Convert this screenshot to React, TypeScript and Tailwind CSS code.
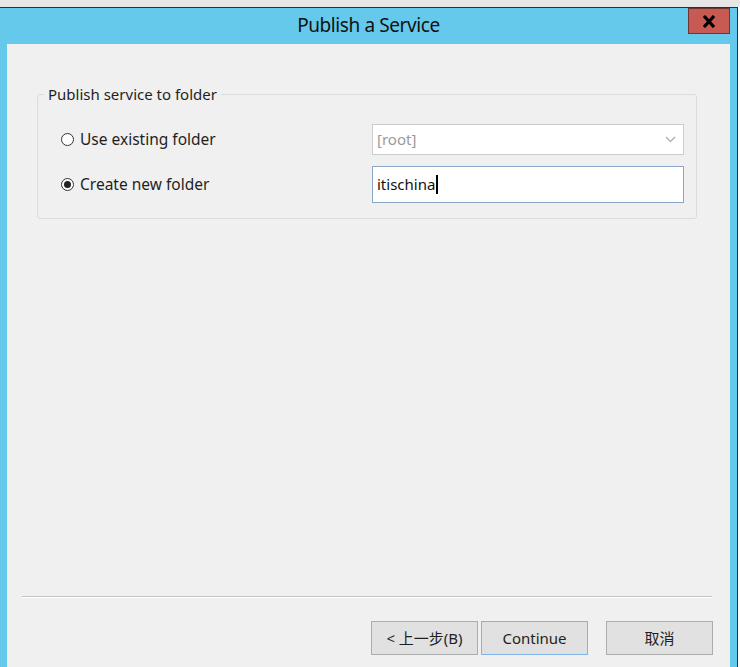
import React from 'react'

const ui = { fontFamily: '"Noto Sans", "Noto Sans CJK SC", sans-serif' }

function Radio({ checked, label }: { checked?: boolean; label: string }) {
  return (
    <label className="flex items-center gap-[6px] text-[15.5px] text-[#1f1f1f]">
      <span className="w-[13px] h-[13px] rounded-full border border-[#333] bg-white flex items-center justify-center">
        {checked && <span className="w-[7px] h-[7px] rounded-full bg-[#222]" />}
      </span>
      {label}
    </label>
  )
}

function Button({ children, focused }: { children: React.ReactNode; focused?: boolean }) {
  return (
    <button
      className={
        focused
          ? 'w-[107px] h-[34px] bg-[#e1e1e1] border border-[#7eb4ea] text-[15px] text-[#1f1f1f]'
          : 'w-[107px] h-[34px] bg-[#e1e1e1] border border-[#adadad] text-[15px] text-[#1f1f1f]'
      }
    >
      {children}
    </button>
  )
}

export default function App() {
  return (
    <div className="w-[740px] h-[667px] flex flex-col bg-[#e6e6e6] overflow-hidden" style={ui}>
      <div className="h-[7px] shrink-0" />
      <div className="flex flex-1 min-h-0">
        <div className="w-[737px] flex flex-col bg-[#64c9ea] border-t border-[#2e2e2e] px-[7px]">
          {/* title bar */}
          <div className="h-[36px] shrink-0 relative flex items-center justify-center">
            <span className="text-[19px] tracking-[-0.4px] text-[#111] pb-[1px]">Publish a Service</span>
            <div className="absolute right-0 top-0 w-[42px] h-[26px] bg-[#c75a52] border border-[#6e3530] flex items-center justify-center">
              <svg width="14" height="13" viewBox="0 0 14 13">
                <path d="M2 1 L12 12 M12 1 L2 12" stroke="#000" strokeWidth="3.2" />
              </svg>
            </div>
          </div>

          {/* content */}
          <div className="flex-1 bg-[#f0f0f0] flex flex-col">
            <fieldset className="ml-[30px] mt-[40px] w-[660px] border border-[#dcdcdc] rounded-[3px] pl-[23px] pr-[12px] pt-[20px] pb-[15px] flex flex-col gap-[11px]">
              <legend className="-ml-[17px] px-[4px] text-[15px] leading-[20px] text-[#1f1f1f]">
                Publish service to folder
              </legend>
              <div className="h-[31px] flex items-center justify-between">
                <Radio label="Use existing folder" />
                <div className="w-[312px] h-[31px] bg-white border border-[#cccccc] flex items-center justify-between pl-[4px] pr-[7px]">
                  <span className="text-[15px] text-[#9a9a9a]">[root]</span>
                  <svg width="11" height="7" viewBox="0 0 11 7">
                    <path d="M1 1 L5.5 5.5 L10 1" stroke="#b5b5b5" strokeWidth="1.5" fill="none" />
                  </svg>
                </div>
              </div>
              <div className="h-[37px] flex items-center justify-between">
                <Radio checked label="Create new folder" />
                <div className="w-[312px] h-[37px] bg-white border border-[#8aa6c8] flex items-center pl-[4px]">
                  <span className="text-[15px] text-[#111]">itischina</span>
                  <span className="w-[1.5px] h-[19px] bg-black ml-[1px]" />
                </div>
              </div>
            </fieldset>

            <div className="flex-1" />

            <div className="ml-[15px] w-[690px] h-[2px] border-t border-[#c2c2c2] border-b border-b-white" />

            <div className="flex justify-end pr-[17px] pt-[23px] pb-[12px]">
              <div className="flex gap-[3px]">
                <Button>&lt; 上一步(B)</Button>
                <Button focused>Continue</Button>
              </div>
              <div className="ml-[18px]">
                <Button>取消</Button>
              </div>
            </div>
          </div>
        </div>
        <div className="w-px bg-[#2e2e2e]" />
        <div className="flex-1 bg-white" />
      </div>
    </div>
  )
}
